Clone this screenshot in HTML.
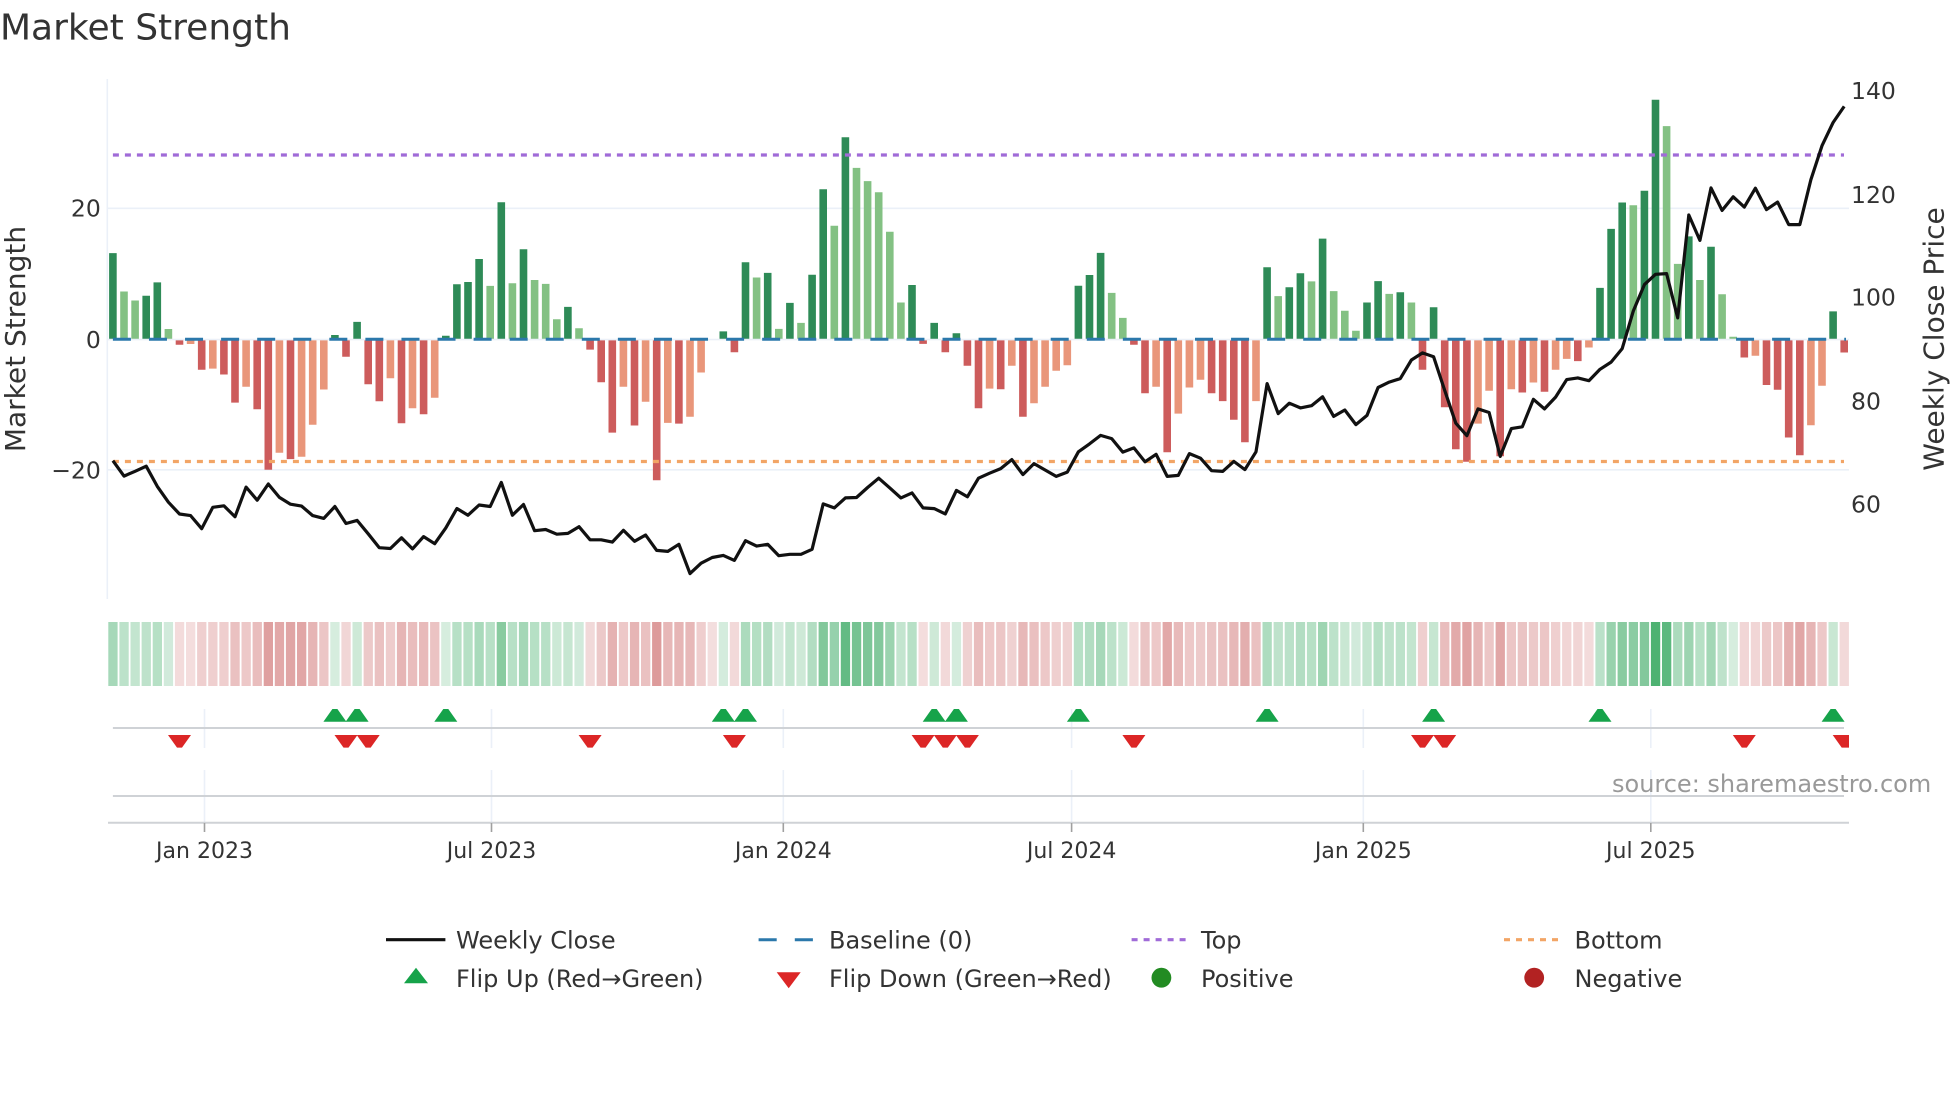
<!DOCTYPE html>
<html><head><meta charset="utf-8"><title>Market Strength</title>
<style>
html,body{margin:0;padding:0;background:#fff}
svg{display:block}
text{font-family:"DejaVu Sans","Liberation Sans",sans-serif;fill:#333}
.c{opacity:.88}
.c rect{y:622px;height:64px;width:9.3px}
.g{fill:#1f9d4d}.r{fill:#c04545}
.t{font-size:22px}
.y{font-size:23.5px}
.l{font-size:24px}
</style></head><body>
<svg xmlns="http://www.w3.org/2000/svg" width="1960" height="1102" viewBox="0 0 1960 1102">
<defs>
<polygon id="u" points="-11.5,721.7 11.5,721.7 2.5,709 -2.5,709" fill="#16a34a"/>
<polygon id="d" points="-11.5,735 11.5,735 2.5,747.6 -2.5,747.6" fill="#dc2626"/>
</defs>
<rect width="1960" height="1102" fill="#fff"/>
<text x="0" y="39.5" style="font-size:36px">Market Strength</text>

<!-- grid -->
<g stroke="#ebf0f8" stroke-width="1.6" fill="none">
<path d="M107.3 79V599"/>
<path d="M107 208.3H1849M107 469.8H1849"/>
<path d="M204.5 709V748M491.5 709V748M783.3 709V748M1071.6 709V748M1363.3 709V748M1650.8 709V748"/>
<path d="M204.5 770V823M491.5 770V823M783.3 770V823M1071.6 770V823M1363.3 770V823M1650.8 770V823"/>
</g>

<!-- bars -->
<path fill="#2e8b57" d="M109.1 339.3v-86.2h7.6v86.2zM142.4 339.3v-43.5h7.6v43.5zM153.5 339.3v-56.9h7.6v56.9zM331.1 339.3v-4.3h7.6v4.3zM353.3 339.3v-17.4h7.6v17.4zM442 339.3v-3.5h7.6v3.5zM453.1 339.3v-55h7.6v55zM464.2 339.3v-57.3h7.6v57.3zM475.3 339.3v-80.3h7.6v80.3zM497.5 339.3v-137h7.6v137zM519.7 339.3v-90h7.6v90zM564.1 339.3v-32.4h7.6v32.4zM719.5 339.3v-7.9h7.6v7.9zM741.7 339.3v-77h7.6v77zM763.9 339.3v-66.4h7.6v66.4zM786.1 339.3v-36.4h7.6v36.4zM808.3 339.3v-64.6h7.6v64.6zM819.4 339.3v-150h7.6v150zM841.6 339.3v-202h7.6v202zM908.2 339.3v-54.3h7.6v54.3zM930.4 339.3v-16.4h7.6v16.4zM952.6 339.3v-6h7.6v6zM1074.6 339.3v-53.6h7.6v53.6zM1085.7 339.3v-64.3h7.6v64.3zM1096.8 339.3v-86.4h7.6v86.4zM1263.3 339.3v-72h7.6v72zM1285.5 339.3v-52h7.6v52zM1296.6 339.3v-66h7.6v66zM1318.8 339.3v-100.7h7.6v100.7zM1363.2 339.3v-36.8h7.6v36.8zM1374.3 339.3v-58.2h7.6v58.2zM1396.5 339.3v-47h7.6v47zM1429.8 339.3v-32.1h7.6v32.1zM1596.2 339.3v-51.4h7.6v51.4zM1607.3 339.3v-110.4h7.6v110.4zM1618.4 339.3v-136.8h7.6v136.8zM1640.6 339.3v-148.6h7.6v148.6zM1651.7 339.3v-239.6h7.6v239.6zM1685 339.3v-102.9h7.6v102.9zM1707.2 339.3v-92.5h7.6v92.5zM1829.3 339.3v-27.9h7.6v27.9z"/>
<path fill="#83c183" d="M120.2 339.3v-47.8h7.6v47.8zM131.3 339.3v-38.8h7.6v38.8zM164.6 339.3v-10.3h7.6v10.3zM486.4 339.3v-53.4h7.6v53.4zM508.6 339.3v-56h7.6v56zM530.8 339.3v-59.3h7.6v59.3zM541.9 339.3v-55.4h7.6v55.4zM553 339.3v-20h7.6v20zM575.2 339.3v-11h7.6v11zM752.8 339.3v-61.8h7.6v61.8zM775 339.3v-10.4h7.6v10.4zM797.2 339.3v-16.4h7.6v16.4zM830.5 339.3v-113.6h7.6v113.6zM852.7 339.3v-171.4h7.6v171.4zM863.8 339.3v-158.2h7.6v158.2zM874.9 339.3v-147h7.6v147zM886 339.3v-107.5h7.6v107.5zM897.1 339.3v-36.8h7.6v36.8zM1107.9 339.3v-46.4h7.6v46.4zM1119 339.3v-21.4h7.6v21.4zM1274.4 339.3v-43.2h7.6v43.2zM1307.7 339.3v-57.9h7.6v57.9zM1329.9 339.3v-48.2h7.6v48.2zM1341 339.3v-28.6h7.6v28.6zM1352.1 339.3v-8.6h7.6v8.6zM1385.4 339.3v-45.4h7.6v45.4zM1407.6 339.3v-36.8h7.6v36.8zM1629.5 339.3v-134h7.6v134zM1662.8 339.3v-213.2h7.6v213.2zM1673.9 339.3v-75.4h7.6v75.4zM1696.1 339.3v-59.3h7.6v59.3zM1718.3 339.3v-45h7.6v45zM1729.4 339.3v-2.5h7.6v2.5z"/>
<path fill="#cd5c5c" d="M175.7 339.3v5.5h7.6v-5.5zM197.9 339.3v30.4h7.6v-30.4zM220.1 339.3v35.2h7.6v-35.2zM231.2 339.3v63.3h7.6v-63.3zM253.4 339.3v70h7.6v-70zM264.5 339.3v130.5h7.6v-130.5zM286.7 339.3v119.8h7.6v-119.8zM342.2 339.3v17.4h7.6v-17.4zM364.4 339.3v45h7.6v-45zM375.5 339.3v62h7.6v-62zM397.7 339.3v84h7.6v-84zM419.8 339.3v75h7.6v-75zM586.3 339.3v10.3h7.6v-10.3zM597.4 339.3v43h7.6v-43zM608.5 339.3v93.3h7.6v-93.3zM630.7 339.3v86.2h7.6v-86.2zM652.9 339.3v141h7.6v-141zM675.1 339.3v84.3h7.6v-84.3zM730.6 339.3v12.9h7.6v-12.9zM919.3 339.3v4.6h7.6v-4.6zM941.5 339.3v12.9h7.6v-12.9zM963.6 339.3v26.4h7.6v-26.4zM974.7 339.3v69h7.6v-69zM996.9 339.3v50h7.6v-50zM1019.1 339.3v77.5h7.6v-77.5zM1130.1 339.3v5.4h7.6v-5.4zM1141.2 339.3v54h7.6v-54zM1163.4 339.3v112.9h7.6v-112.9zM1207.8 339.3v54h7.6v-54zM1218.9 339.3v61.8h7.6v-61.8zM1230 339.3v80.4h7.6v-80.4zM1241.1 339.3v102.9h7.6v-102.9zM1418.7 339.3v30.4h7.6v-30.4zM1440.9 339.3v67.9h7.6v-67.9zM1452 339.3v110h7.6v-110zM1463.1 339.3v122.5h7.6v-122.5zM1496.4 339.3v117h7.6v-117zM1518.5 339.3v53.2h7.6v-53.2zM1540.7 339.3v52.5h7.6v-52.5zM1574 339.3v21.8h7.6v-21.8zM1740.5 339.3v18.2h7.6v-18.2zM1762.7 339.3v45.7h7.6v-45.7zM1773.8 339.3v50.4h7.6v-50.4zM1784.9 339.3v98.2h7.6v-98.2zM1796 339.3v116h7.6v-116zM1840.4 339.3v13.2h7.6v-13.2z"/>
<path fill="#e9967a" d="M186.8 339.3v4.7h7.6v-4.7zM209 339.3v29.3h7.6v-29.3zM242.3 339.3v47.4h7.6v-47.4zM275.6 339.3v113.5h7.6v-113.5zM297.8 339.3v117.4h7.6v-117.4zM308.9 339.3v85.4h7.6v-85.4zM320 339.3v50.2h7.6v-50.2zM386.6 339.3v39h7.6v-39zM408.7 339.3v69h7.6v-69zM430.9 339.3v58.5h7.6v-58.5zM619.6 339.3v47.4h7.6v-47.4zM641.8 339.3v62.5h7.6v-62.5zM664 339.3v83.6h7.6v-83.6zM686.2 339.3v77.5h7.6v-77.5zM697.3 339.3v33.2h7.6v-33.2zM985.8 339.3v49.3h7.6v-49.3zM1008 339.3v26.4h7.6v-26.4zM1030.2 339.3v64h7.6v-64zM1041.3 339.3v47.5h7.6v-47.5zM1052.4 339.3v31.4h7.6v-31.4zM1063.5 339.3v26h7.6v-26zM1152.3 339.3v47.5h7.6v-47.5zM1174.5 339.3v74.3h7.6v-74.3zM1185.6 339.3v48.2h7.6v-48.2zM1196.7 339.3v40.4h7.6v-40.4zM1252.2 339.3v61.8h7.6v-61.8zM1474.2 339.3v84.3h7.6v-84.3zM1485.3 339.3v51.4h7.6v-51.4zM1507.5 339.3v50h7.6v-50zM1529.6 339.3v43.2h7.6v-43.2zM1551.8 339.3v30.4h7.6v-30.4zM1562.9 339.3v19.6h7.6v-19.6zM1585.1 339.3v8.2h7.6v-8.2zM1751.6 339.3v16.4h7.6v-16.4zM1807.1 339.3v86h7.6v-86zM1818.2 339.3v46.4h7.6v-46.4z"/>

<!-- reference lines -->
<path d="M107 339.6H1849" stroke="#ebf0f8" stroke-width="1.6" fill="none"/>
<path d="M112.9 339.3H1846" stroke="#2b78ab" stroke-width="3" stroke-dasharray="18 18.07" fill="none"/>
<path d="M112.9 155H1844" stroke="#a06bd8" stroke-width="3.2" stroke-dasharray="6 6" fill="none"/>
<path d="M112.9 461.5H1844" stroke="#f2a566" stroke-width="3.2" stroke-dasharray="6 6" fill="none"/>

<!-- weekly close -->
<polyline fill="none" stroke="#111" stroke-width="3.2" stroke-linejoin="round" points="112.9,460.7 124,476.1 135.1,471.3 146.2,466.2 157.3,486.4 168.4,502.2 179.5,514 190.6,515.6 201.7,528.7 212.8,507.3 223.9,505.8 235,516.8 246.1,487.1 257.2,500.2 268.3,484 279.4,497.4 290.5,504.2 301.6,506.1 312.7,515.6 323.8,518.4 334.9,506.5 346,523.5 357.1,520.4 368.2,533.8 379.3,547.7 390.4,548.5 401.5,537.8 412.5,548.9 423.6,536.6 434.7,543.7 445.8,527.9 456.9,508.5 468,515.2 479.1,505 490.2,506.5 501.3,482.4 512.4,515.2 523.5,504.5 534.6,530.7 545.7,529.5 556.8,534.2 567.9,533.4 579,526.7 590.1,539.8 601.2,539.8 612.3,542.1 623.4,530.3 634.5,541.3 645.6,535 656.7,550.4 667.8,551.4 678.9,544.3 690,573.6 701.1,563.2 712.2,557.5 723.3,555.4 734.4,560.4 745.5,540.7 756.6,546.1 767.7,544.3 778.8,555.7 789.9,554.3 801,554.3 812.1,549.3 823.2,503.9 834.3,507.9 845.4,497.9 856.5,497.5 867.6,487.5 878.7,478.2 889.8,487.9 900.9,497.9 912,492.9 923.1,507.9 934.2,508.6 945.3,513.9 956.4,490.4 967.4,496.8 978.5,478.2 989.6,473.2 1000.7,468.6 1011.8,459.6 1022.9,474.6 1034,463.6 1045.1,470 1056.2,476.4 1067.3,472.1 1078.4,451.8 1089.5,443.9 1100.6,435.4 1111.7,438.6 1122.8,452.1 1133.9,447.9 1145,461.8 1156.1,454.3 1167.2,476.4 1178.3,475.4 1189.4,453.6 1200.5,458.2 1211.6,470.7 1222.7,471.4 1233.8,461.4 1244.9,469.6 1256,451.8 1267.1,383.6 1278.2,413.6 1289.3,403.2 1300.4,407.9 1311.5,405.7 1322.6,396.8 1333.7,416.4 1344.8,410 1355.9,424.6 1367,415.4 1378.1,387.5 1389.2,382.1 1400.3,378.6 1411.4,360 1422.5,352.9 1433.6,356.8 1444.7,390.4 1455.8,423.2 1466.9,435.7 1478,408.9 1489.1,412.5 1500.2,456.4 1511.3,428.6 1522.3,426.8 1533.4,399.3 1544.5,408.9 1555.6,397.1 1566.7,379.6 1577.8,377.9 1588.9,380.7 1600,369.3 1611.1,362.1 1622.2,348.6 1633.3,311 1644.4,284.6 1655.5,274.3 1666.6,273.6 1677.7,317.9 1688.8,215 1699.9,240.4 1711,187.9 1722.1,210.4 1733.2,196.8 1744.3,207.1 1755.4,188.2 1766.5,209.6 1777.6,202.1 1788.7,224.6 1799.8,224.6 1810.9,179.6 1822,145.7 1833.1,122.5 1844.2,106.4"/>

<!-- heat strip -->
<g class="c">
<rect class="g" x="108.3" fill-opacity=".45"/><rect class="g" x="119.4" fill-opacity=".34"/><rect class="g" x="130.5" fill-opacity=".31"/><rect class="g" x="141.6" fill-opacity=".33"/><rect class="g" x="152.7" fill-opacity=".37"/><rect class="g" x="163.8" fill-opacity=".23"/><rect class="r" x="174.9" fill-opacity=".22"/><rect class="r" x="186" fill-opacity=".21"/><rect class="r" x="197.1" fill-opacity=".29"/><rect class="r" x="208.2" fill-opacity=".29"/><rect class="r" x="219.3" fill-opacity=".3"/><rect class="r" x="230.4" fill-opacity=".38"/><rect class="r" x="241.5" fill-opacity=".34"/><rect class="r" x="252.6" fill-opacity=".4"/><rect class="r" x="263.7" fill-opacity=".58"/><rect class="r" x="274.8" fill-opacity=".53"/><rect class="r" x="285.9" fill-opacity=".55"/><rect class="r" x="297" fill-opacity=".54"/><rect class="r" x="308.1" fill-opacity=".45"/><rect class="r" x="319.2" fill-opacity=".35"/><rect class="g" x="330.3" fill-opacity=".21"/><rect class="r" x="341.4" fill-opacity=".25"/><rect class="g" x="352.5" fill-opacity=".25"/><rect class="r" x="363.6" fill-opacity=".33"/><rect class="r" x="374.7" fill-opacity=".38"/><rect class="r" x="385.8" fill-opacity=".31"/><rect class="r" x="396.9" fill-opacity=".45"/><rect class="r" x="407.9" fill-opacity=".4"/><rect class="r" x="419" fill-opacity=".42"/><rect class="r" x="430.1" fill-opacity=".37"/><rect class="g" x="441.2" fill-opacity=".21"/><rect class="g" x="452.3" fill-opacity=".36"/><rect class="g" x="463.4" fill-opacity=".37"/><rect class="g" x="474.5" fill-opacity=".43"/><rect class="g" x="485.6" fill-opacity=".36"/><rect class="g" x="496.7" fill-opacity=".6"/><rect class="g" x="507.8" fill-opacity=".36"/><rect class="g" x="518.9" fill-opacity=".46"/><rect class="g" x="530" fill-opacity=".37"/><rect class="g" x="541.1" fill-opacity=".36"/><rect class="g" x="552.2" fill-opacity=".26"/><rect class="g" x="563.3" fill-opacity=".29"/><rect class="g" x="574.4" fill-opacity=".23"/><rect class="r" x="585.5" fill-opacity=".23"/><rect class="r" x="596.6" fill-opacity=".33"/><rect class="r" x="607.7" fill-opacity=".47"/><rect class="r" x="618.8" fill-opacity=".34"/><rect class="r" x="629.9" fill-opacity=".45"/><rect class="r" x="641" fill-opacity=".38"/><rect class="r" x="652.1" fill-opacity=".61"/><rect class="r" x="663.2" fill-opacity=".44"/><rect class="r" x="674.3" fill-opacity=".45"/><rect class="r" x="685.4" fill-opacity=".43"/><rect class="r" x="696.5" fill-opacity=".3"/><rect class="r" x="707.6" fill-opacity=".2"/><rect class="g" x="718.7" fill-opacity=".22"/><rect class="r" x="729.8" fill-opacity=".24"/><rect class="g" x="740.9" fill-opacity=".42"/><rect class="g" x="752" fill-opacity=".38"/><rect class="g" x="763.1" fill-opacity=".39"/><rect class="g" x="774.2" fill-opacity=".23"/><rect class="g" x="785.3" fill-opacity=".31"/><rect class="g" x="796.4" fill-opacity=".25"/><rect class="g" x="807.5" fill-opacity=".39"/><rect class="g" x="818.6" fill-opacity=".64"/><rect class="g" x="829.7" fill-opacity=".53"/><rect class="g" x="840.8" fill-opacity=".79"/><rect class="g" x="851.9" fill-opacity=".7"/><rect class="g" x="863" fill-opacity=".66"/><rect class="g" x="874.1" fill-opacity=".63"/><rect class="g" x="885.2" fill-opacity=".51"/><rect class="g" x="896.3" fill-opacity=".31"/><rect class="g" x="907.4" fill-opacity=".36"/><rect class="r" x="918.5" fill-opacity=".21"/><rect class="g" x="929.6" fill-opacity=".25"/><rect class="r" x="940.7" fill-opacity=".24"/><rect class="g" x="951.8" fill-opacity=".22"/><rect class="r" x="962.8" fill-opacity=".28"/><rect class="r" x="973.9" fill-opacity=".4"/><rect class="r" x="985" fill-opacity=".34"/><rect class="r" x="996.1" fill-opacity=".35"/><rect class="r" x="1007.2" fill-opacity=".28"/><rect class="r" x="1018.3" fill-opacity=".43"/><rect class="r" x="1029.4" fill-opacity=".39"/><rect class="r" x="1040.5" fill-opacity=".34"/><rect class="r" x="1051.6" fill-opacity=".29"/><rect class="r" x="1062.7" fill-opacity=".28"/><rect class="g" x="1073.8" fill-opacity=".36"/><rect class="g" x="1084.9" fill-opacity=".39"/><rect class="g" x="1096" fill-opacity=".45"/><rect class="g" x="1107.1" fill-opacity=".34"/><rect class="g" x="1118.2" fill-opacity=".26"/><rect class="r" x="1129.3" fill-opacity=".22"/><rect class="r" x="1140.4" fill-opacity=".36"/><rect class="r" x="1151.5" fill-opacity=".34"/><rect class="r" x="1162.6" fill-opacity=".53"/><rect class="r" x="1173.7" fill-opacity=".42"/><rect class="r" x="1184.8" fill-opacity=".34"/><rect class="r" x="1195.9" fill-opacity=".32"/><rect class="r" x="1207" fill-opacity=".36"/><rect class="r" x="1218.1" fill-opacity=".38"/><rect class="r" x="1229.2" fill-opacity=".43"/><rect class="r" x="1240.3" fill-opacity=".5"/><rect class="r" x="1251.4" fill-opacity=".38"/><rect class="g" x="1262.5" fill-opacity=".41"/><rect class="g" x="1273.6" fill-opacity=".33"/><rect class="g" x="1284.7" fill-opacity=".35"/><rect class="g" x="1295.8" fill-opacity=".39"/><rect class="g" x="1306.9" fill-opacity=".37"/><rect class="g" x="1318" fill-opacity=".49"/><rect class="g" x="1329.1" fill-opacity=".34"/><rect class="g" x="1340.2" fill-opacity=".28"/><rect class="g" x="1351.3" fill-opacity=".23"/><rect class="g" x="1362.4" fill-opacity=".31"/><rect class="g" x="1373.5" fill-opacity=".37"/><rect class="g" x="1384.6" fill-opacity=".33"/><rect class="g" x="1395.7" fill-opacity=".34"/><rect class="g" x="1406.8" fill-opacity=".31"/><rect class="r" x="1417.9" fill-opacity=".29"/><rect class="g" x="1429" fill-opacity=".29"/><rect class="r" x="1440.1" fill-opacity=".4"/><rect class="r" x="1451.2" fill-opacity=".52"/><rect class="r" x="1462.3" fill-opacity=".56"/><rect class="r" x="1473.4" fill-opacity=".45"/><rect class="r" x="1484.5" fill-opacity=".35"/><rect class="r" x="1495.6" fill-opacity=".54"/><rect class="r" x="1506.7" fill-opacity=".35"/><rect class="r" x="1517.7" fill-opacity=".36"/><rect class="r" x="1528.8" fill-opacity=".33"/><rect class="r" x="1539.9" fill-opacity=".35"/><rect class="r" x="1551" fill-opacity=".29"/><rect class="r" x="1562.1" fill-opacity=".26"/><rect class="r" x="1573.2" fill-opacity=".26"/><rect class="r" x="1584.3" fill-opacity=".22"/><rect class="g" x="1595.4" fill-opacity=".35"/><rect class="g" x="1606.5" fill-opacity=".52"/><rect class="g" x="1617.6" fill-opacity=".6"/><rect class="g" x="1628.7" fill-opacity=".59"/><rect class="g" x="1639.8" fill-opacity=".63"/><rect class="g" x="1650.9" fill-opacity=".9"/><rect class="g" x="1662" fill-opacity=".82"/><rect class="g" x="1673.1" fill-opacity=".42"/><rect class="g" x="1684.2" fill-opacity=".5"/><rect class="g" x="1695.3" fill-opacity=".37"/><rect class="g" x="1706.4" fill-opacity=".47"/><rect class="g" x="1717.5" fill-opacity=".33"/><rect class="g" x="1728.6" fill-opacity=".21"/><rect class="r" x="1739.7" fill-opacity=".25"/><rect class="r" x="1750.8" fill-opacity=".25"/><rect class="r" x="1761.9" fill-opacity=".33"/><rect class="r" x="1773" fill-opacity=".35"/><rect class="r" x="1784.1" fill-opacity=".49"/><rect class="r" x="1795.2" fill-opacity=".54"/><rect class="r" x="1806.3" fill-opacity=".45"/><rect class="r" x="1817.4" fill-opacity=".34"/><rect class="g" x="1828.5" fill-opacity=".28"/><rect class="r" x="1839.6" fill-opacity=".24"/>
</g>

<!-- strip axes -->
<g fill="none" stroke="#cfd2d6" stroke-width="2">
<path d="M112.9 728H1844M112.9 796H1844M108 822.8H1849"/>
</g>
<path d="M204.5 823V832M491.5 823V832M783.3 823V832M1071.6 823V832M1363.3 823V832M1650.8 823V832" stroke="#a0a0a0" stroke-width="1.6" fill="none"/>

<!-- markers -->
<use href="#u" x="334.9"/><use href="#u" x="357.1"/><use href="#u" x="445.8"/><use href="#u" x="723.3"/><use href="#u" x="745.5"/><use href="#u" x="934.2"/><use href="#u" x="956.4"/><use href="#u" x="1078.4"/><use href="#u" x="1267.1"/><use href="#u" x="1433.6"/><use href="#u" x="1600"/><use href="#u" x="1833.1"/>
<use href="#d" x="179.5"/><use href="#d" x="346"/><use href="#d" x="368.2"/><use href="#d" x="590.1"/><use href="#d" x="734.4"/><use href="#d" x="923.1"/><use href="#d" x="945.3"/><use href="#d" x="967.4"/><use href="#d" x="1133.9"/><use href="#d" x="1422.5"/><use href="#d" x="1444.7"/><use href="#d" x="1744.3"/>
<polygon points="1832.7,735 1849,735 1849,747.6 1841.7,747.6" fill="#dc2626"/>

<!-- axis text -->
<g class="y">
<text x="100.8" y="216.3" text-anchor="end">20</text>
<text x="100.8" y="347.8" text-anchor="end">0</text>
<text x="100.8" y="478.3" text-anchor="end">−20</text>
<text x="1851" y="98.8">140</text>
<text x="1851" y="202.8">120</text>
<text x="1851" y="305.3">100</text>
<text x="1851" y="409.3">80</text>
<text x="1851" y="512.3">60</text>
</g>
<g class="t">
<text x="204.5" y="858" text-anchor="middle">Jan 2023</text>
<text x="491.5" y="858" text-anchor="middle">Jul 2023</text>
<text x="783.3" y="858" text-anchor="middle">Jan 2024</text>
<text x="1071.6" y="858" text-anchor="middle">Jul 2024</text>
<text x="1363.3" y="858" text-anchor="middle">Jan 2025</text>
<text x="1650.8" y="858" text-anchor="middle">Jul 2025</text>
</g>
<text transform="translate(25 339) rotate(-90)" text-anchor="middle" style="font-size:28px">Market Strength</text>
<text transform="translate(1943.5 339) rotate(-90)" text-anchor="middle" style="font-size:28px">Weekly Close Price</text>
<text x="1612" y="792" style="font-size:24px;fill:#999">source: sharemaestro.com</text>

<!-- legend -->
<path d="M386 939.7H445.4" stroke="#111" stroke-width="3.2" fill="none"/>
<path d="M758.6 939.7H776.7M794.8 939.7H812.9" stroke="#2b78ab" stroke-width="3" fill="none"/>
<path d="M1131.6 939.7H1186" stroke="#a06bd8" stroke-width="3.2" stroke-dasharray="6 6" fill="none"/>
<path d="M1504 939.7H1558.6" stroke="#f2a566" stroke-width="3.2" stroke-dasharray="6 6" fill="none"/>
<polygon points="404,983.3 428,983.3 416,967.7" fill="#16a34a"/>
<polygon points="776.7,972.3 800.7,972.3 788.7,988.3" fill="#dc2626"/>
<circle cx="1161.4" cy="977.7" r="9.9" fill="#228b22"/>
<circle cx="1534.2" cy="977.7" r="9.9" fill="#b22222"/>
<g class="l">
<text x="456" y="948.5">Weekly Close</text>
<text x="829" y="948.5">Baseline (0)</text>
<text x="1201" y="948.5">Top</text>
<text x="1574.5" y="948.5">Bottom</text>
<text x="456" y="987">Flip Up (Red→Green)</text>
<text x="829" y="987">Flip Down (Green→Red)</text>
<text x="1201" y="987">Positive</text>
<text x="1574.5" y="987">Negative</text>
</g>
</svg>
</body></html>
